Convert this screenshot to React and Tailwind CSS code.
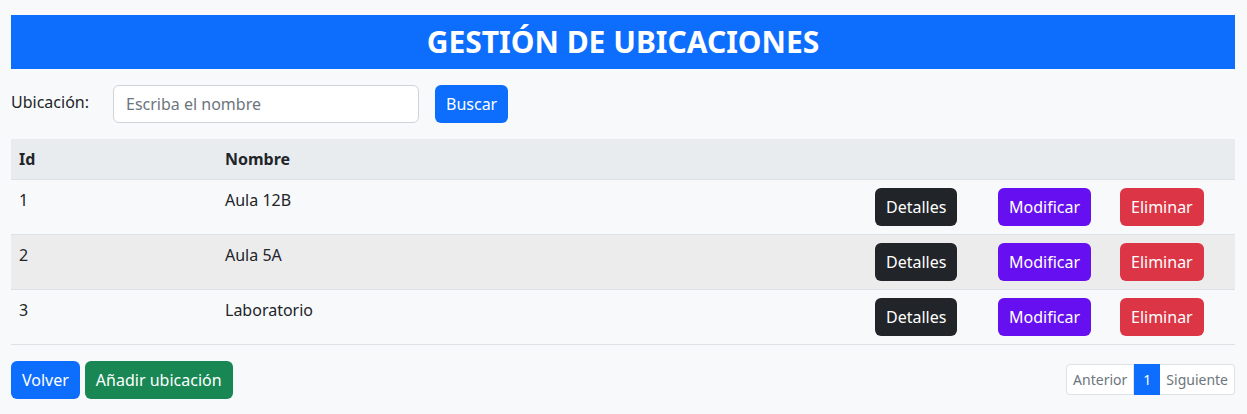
const ROWS = [
  { id: 1, nombre: 'Aula 12B' },
  { id: 2, nombre: 'Aula 5A' },
  { id: 3, nombre: 'Laboratorio' },
]

const btn = 'inline-block h-[38px] px-[11px] rounded-[6px] text-white text-base leading-[38px]'

export default function App() {
  return (
    <div className="min-h-screen bg-[#f8f9fa] text-[#212529] font-['Noto_Sans','Open_Sans',sans-serif] pt-[15px] pl-[11px] pr-[12px]">
      {/* Header */}
      <div className="h-[54px] bg-[#0d6efd] flex items-center justify-center">
        <h2 className="text-white text-[30px] font-bold leading-none">GESTIÓN DE UBICACIONES</h2>
      </div>

      {/* Search */}
      <div className="flex items-center mt-4 h-[38px]">
        <label className="w-[102px] text-base -mt-[4px]">Ubicación:</label>
        <input
          type="text"
          placeholder="Escriba el nombre"
          className="w-[306px] h-[38px] px-3 bg-white border border-[#ced4da] rounded-[6px] text-base placeholder:text-[#6c757d] outline-none"
        />
        <button className={btn + ' ml-4 bg-[#0d6efd]'}>Buscar</button>
      </div>

      {/* Table */}
      <table className="w-full table-fixed mt-4 border-collapse text-base">
        <colgroup>
          <col className="w-[206px]" />
          <col className="w-[650px]" />
          <col className="w-[123px]" />
          <col className="w-[122px]" />
          <col className="w-[123px]" />
        </colgroup>
        <thead>
          <tr className="bg-[#e9ecef] border-b border-[#dee2e6] h-[40px]">
            <th className="text-left font-bold px-2">Id</th>
            <th className="text-left font-bold px-2">Nombre</th>
            <th />
            <th />
            <th />
          </tr>
        </thead>
        <tbody>
          {ROWS.map((r, i) => (
            <tr key={r.id} className={(i % 2 === 1 ? 'bg-[#ececed] ' : '') + 'border-b border-[#dee2e6]'}>
              <td className="px-2 py-2 align-top leading-6">{r.id}</td>
              <td className="px-2 py-2 align-top leading-6">{r.nombre}</td>
              <td className="px-2 py-2 align-top">
                <button className={btn + ' bg-[#212529]'}>Detalles</button>
              </td>
              <td className="px-2 py-2 align-top">
                <button className={btn + ' bg-[#6610f2]'}>Modificar</button>
              </td>
              <td className="px-2 py-2 align-top">
                <button className={btn + ' bg-[#dc3545]'}>Eliminar</button>
              </td>
            </tr>
          ))}
        </tbody>
      </table>

      {/* Footer */}
      <div className="flex items-center justify-between mt-4">
        <div className="flex gap-[5px]">
          <button className={btn + ' bg-[#0d6efd]'}>Volver</button>
          <button className={btn + ' bg-[#198754]'}>Añadir ubicación</button>
        </div>
        <div className="flex h-[31px] text-sm leading-[29px] text-[#6c757d]">
          <span className="px-[6px] bg-white border border-[#dee2e6] rounded-l-[4px]">Anterior</span>
          <span className="px-2 bg-[#0d6efd] border border-[#0d6efd] text-white">1</span>
          <span className="px-[6px] bg-white border border-[#dee2e6] border-l-0 rounded-r-[4px]">Siguiente</span>
        </div>
      </div>
    </div>
  )
}
